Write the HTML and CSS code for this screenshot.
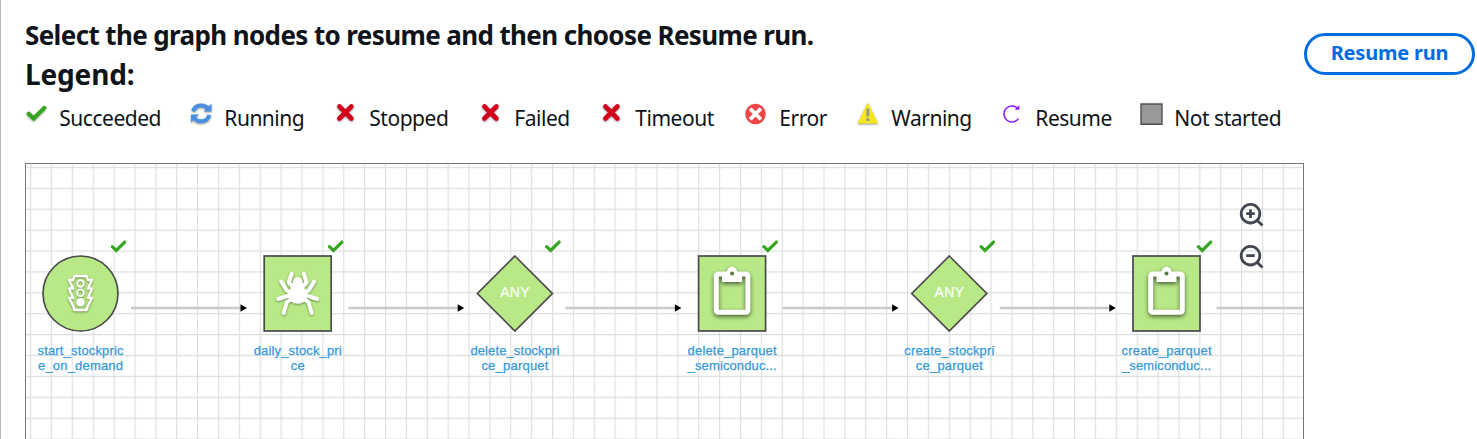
FILE: index.html
```
<!DOCTYPE html>
<html lang="en">
<head>
<meta charset="utf-8">
<title>Resume run</title>
<link rel="stylesheet" href="styles.css">
</head>
<body>
<svg class="defs" width="0" height="0" aria-hidden="true">
  <defs>
    <filter id="soft" x="-30%" y="-30%" width="160%" height="170%" color-interpolation-filters="sRGB"><feDropShadow dx="0" dy="1" stdDeviation="0.8" flood-opacity="0.4"/></filter>
    <filter id="deep" x="-30%" y="-30%" width="160%" height="170%" color-interpolation-filters="sRGB"><feDropShadow dx="0" dy="2" stdDeviation="2" flood-opacity="0.6"/></filter>
    <pattern id="grid" x="4" y="2.8" width="20.88" height="20.9" patternUnits="userSpaceOnUse">
      <path d="M.6 0V20.9M0 .6H20.88" stroke="#dcdede" stroke-width="1.1"/>
    </pattern>
    <symbol id="check" viewBox="0 0 20 16"><path d="M2.2 8.2 7.2 13 17.8 2.4" fill="none" stroke="#36a51f" stroke-width="4" stroke-linecap="round"/></symbol>
    <symbol id="cross" viewBox="0 0 20 20"><path d="M4 4 16 16M16 4 4 16" stroke="#d3001c" stroke-width="4.6" stroke-linecap="round"/></symbol>
    <g id="clipboard">
      <rect x="-15.8" y="-19.5" width="31.6" height="38.3" rx="2" fill="none" stroke="#fff" stroke-width="5"/>
      <path d="M-10-20H-5.5C-5-29 5-29 5.5-20H10V-11.5H-10Z" fill="#fff"/>
      <circle cy="-20" r="2" fill="#5f7747"/>
    </g>
    <g id="arrow"><path d="M50.5 0H161" stroke="#c9c9c9" stroke-width="2.4"/><path d="M160-3.8 166.5 0 160 3.8Z" fill="#000"/></g>
  </defs>
</svg>
<main class="page">
  <header class="header">
    <div class="headings">
      <h1 class="title">Select the graph nodes to resume and then choose Resume run.</h1>
      <h2 class="legend-title">Legend:</h2>
    </div>
    <button class="resume-button"><span>Resume run</span></button>
  </header>
  <ul class="legend">
    <li class="item"><svg class="icon" viewBox="0 0 24 24"><g filter="url(#soft)"><use href="#check" x="1" y="3.5" width="21" height="16"/></g></svg><span>Succeeded</span></li>
    <li class="item"><svg class="icon" viewBox="0 0 24 24"><g filter="url(#soft)" fill="none" stroke="#4a90e2" stroke-width="4"><path d="M3.2 9.3C5 2.5 14 1.8 18 6.3"/><path d="M19.4 13C17.4 20.3 8.4 21 4.6 16.4"/><path d="M21.5 1.5V9.5H13.5ZM1 20.5V12.5H9Z" fill="#4a90e2" stroke="none"/></g></svg><span>Running</span></li>
    <li class="item"><svg class="icon" viewBox="0 0 24 24"><g filter="url(#soft)"><use href="#cross" x=".4" y=".5" width="20" height="20"/></g></svg><span>Stopped</span></li>
    <li class="item"><svg class="icon" viewBox="0 0 24 24"><g filter="url(#soft)"><use href="#cross" x=".4" y=".5" width="20" height="20"/></g></svg><span>Failed</span></li>
    <li class="item"><svg class="icon" viewBox="0 0 24 24"><g filter="url(#soft)"><use href="#cross" x=".4" y=".5" width="20" height="20"/></g></svg><span>Timeout</span></li>
    <li class="item"><svg class="icon" viewBox="0 0 24 24"><circle cx="10.5" cy="12" r="10.3" fill="#ef4648"/><path d="M6.5 8 14.5 16M14.5 8 6.5 16" stroke="#fff" stroke-width="3.8" stroke-linecap="square"/></svg><span>Error</span></li>
    <li class="item"><svg class="icon" viewBox="0 0 24 24"><g filter="url(#soft)"><path d="M10.8 1.5 20.4 21H1.2Z" fill="#f6e61e" stroke="#f6e61e" stroke-linejoin="round"/></g><path d="M10.8 6.5V14.5M10.8 16.3V19" stroke="#969696" stroke-width="2.8"/></svg><span>Warning</span></li>
    <li class="item"><svg class="icon" viewBox="0 0 24 24"><path d="M16.7 6.4A8 8 0 1 0 17.5 16.6" fill="none" stroke="#8c19f5" stroke-width="1.5"/><path d="M18.3 3.1V7.8H13.6Z" fill="#8c19f5"/></svg><span>Resume</span></li>
    <li class="item"><svg class="icon" viewBox="0 0 24 24"><path d="M1 2H22V22.3H1Z" fill="#999" stroke="#505050" stroke-width="1.4"/></svg><span>Not started</span></li>
  </ul>
  <section class="graph">
    <svg class="canvas" width="1277" height="276" viewBox="0 0 1277 276">
      <rect width="1277" height="276" fill="url(#grid)"/>
      <g class="edges">
        <use href="#arrow" x="54.5" y="144"/><use href="#arrow" x="271.7" y="144"/><use href="#arrow" x="488.9" y="144"/><use href="#arrow" x="706.1" y="144"/><use href="#arrow" x="923.3" y="144"/>
        <path d="M1190.5 144H1277" stroke="#c9c9c9" stroke-width="2.4"/>
      </g>
      <g transform="translate(54.5 129.5)">
        <circle class="shape" r="37.5"/>
        <g filter="url(#soft)" fill="none" stroke="#fff" stroke-width="2.4" stroke-linejoin="round">
          <path d="M-6-17.5H6L7.5-13.5H11.5L7.5-5H11.5L7.5 4.5H11.5L7.5 12 6 16.5H-6L-7.5 12-11.5 4.5H-7.5L-11.5-5H-7.5L-11.5-13.5H-7.5Z"/>
          <g stroke-width="1.9"><circle cy="-10" r="3.3"/><circle cy="-.8" r="3.3"/><circle cy="8.7" r="3.3" fill="#fff"/></g>
        </g>
        <use href="#check" x="30" y="-53.5" width="16" height="13"/>
        <text class="name" y="61" textLength="86">start_stockpric</text><text class="name" y="76" textLength="85">e_on_demand</text>
      </g>
      <g transform="translate(271.7 129.5)">
        <rect class="shape" x="-33.5" y="-37.5" width="67" height="75"/>
        <g filter="url(#soft)" fill="none" stroke="#fff" stroke-width="4" stroke-linecap="round" stroke-linejoin="round">
          <path d="M-6-20-9-11-4-6M6-20 9-11 4-6M-16.5-12-11-3-5 0M16.5-12 11-3 5 0M-19.5 5.5-6 1M19.5 5.5 6 1M-14 19.5-11 9-6 5M14 19.5 11 9 6 5"/>
          <ellipse cy="1.3" rx="9.8" ry="9" fill="#fff" stroke="none"/><path d="M-4.8-11C-4.8-18 4.8-18 4.8-11V0H-4.8Z" fill="#fff" stroke="none"/>
        </g>
        <use href="#check" x="30" y="-53.5" width="16" height="13"/>
        <text class="name" y="61" textLength="88">daily_stock_pri</text><text class="name" y="76" textLength="14">ce</text>
      </g>
      <g transform="translate(488.9 129.5)">
        <path class="shape" d="M0-37.5 37.5 0 0 37.5-37.5 0Z"/><text class="gate" y="3.5" textLength="29.5">ANY</text>
        <use href="#check" x="30" y="-53.5" width="16" height="13"/>
        <text class="name" y="61" textLength="89">delete_stockpri</text><text class="name" y="76" textLength="67">ce_parquet</text>
      </g>
      <g transform="translate(706.1 129.5)">
        <rect class="shape" x="-33.5" y="-37.5" width="67" height="75"/><g filter="url(#deep)"><use href="#clipboard"/></g>
        <use href="#check" x="30" y="-53.5" width="16" height="13"/>
        <text class="name" y="61" textLength="89">delete_parquet</text><text class="name" y="76" textLength="89">_semiconduc...</text>
      </g>
      <g transform="translate(923.3 129.5)">
        <path class="shape" d="M0-37.5 37.5 0 0 37.5-37.5 0Z"/><text class="gate" y="3.5" textLength="29.5">ANY</text>
        <use href="#check" x="30" y="-53.5" width="16" height="13"/>
        <text class="name" y="61" textLength="90">create_stockpri</text><text class="name" y="76" textLength="67">ce_parquet</text>
      </g>
      <g transform="translate(1140.5 129.5)">
        <rect class="shape" x="-33.5" y="-37.5" width="67" height="75"/><g filter="url(#deep)"><use href="#clipboard"/></g>
        <use href="#check" x="30" y="-53.5" width="16" height="13"/>
        <text class="name" y="61" textLength="90">create_parquet</text><text class="name" y="76" textLength="89">_semiconduc...</text>
      </g>
      <g class="zoom"><circle cx="1224.5" cy="49.7" r="9.3"/><path d="M1231 56.2 1236.5 61.5M1220.2 49.7H1228.8M1224.5 45.4V54"/></g>
      <g class="zoom"><circle cx="1224.5" cy="91.7" r="9.3"/><path d="M1231 98.2 1236.5 103.5M1220.2 91.7H1228.8"/></g>
    </svg>
  </section>
</main>
</body>
</html>
```
FILE: styles.css
```
* { box-sizing: border-box; }
body { margin: 0; background: #fff; color: #0f141a; font-family: "Noto Sans", sans-serif; overflow: hidden; }
.defs { position: absolute; }
.page { height: 439px; padding: 16px 0 0 24px; border-left: 1px solid #b4b4bb; }
.header { display: flex; justify-content: space-between; align-items: flex-start; height: 77px; }
.title, .legend-title { margin: 0; font-size: 26px; line-height: 38px; font-weight: 700; white-space: nowrap; }
.title { letter-spacing: -0.62px; }
.legend-title { padding-top: 1px; font-size: 28px; letter-spacing: -0.15px; }
.resume-button { width: 171px; height: 42px; margin: 17px 2px 0 0; padding: 0 0 2px; border: 3px solid #006ce0; border-radius: 21px; background: #fff; color: #006ce0; font: 700 20px/34px "Noto Sans", sans-serif; letter-spacing: -0.2px; white-space: nowrap; }
.legend { display: grid; grid-template-columns: 165px 145px 145px 121px 144px 112px 144px 139px auto; height: 70px; margin: 0; padding: 7px 0 0; list-style: none; font-size: 21px; line-height: 37px; letter-spacing: -0.48px; white-space: nowrap; }
.item { display: flex; align-items: flex-start; gap: 10.3px; }
.icon { flex: none; width: 24px; height: 24px; margin-top: 2px; }
.graph { width: 1279px; height: 276px; border: 1px solid #777; border-bottom: 0; overflow: hidden; }
.canvas { display: block; }
.shape { fill: #b8e986; stroke: #4a4a4a; stroke-width: 1.7; }
.name { fill: #3498d9; stroke: #3498d9; stroke-width: 0.25; font: 13px "Liberation Sans", Arial, sans-serif; text-anchor: middle; }
.gate { fill: #fff; stroke: #fff; stroke-width: 0.2; font: 14px "Liberation Sans", Arial, sans-serif; text-anchor: middle; }
.zoom { fill: none; stroke: #424650; stroke-width: 2.8; }
```
